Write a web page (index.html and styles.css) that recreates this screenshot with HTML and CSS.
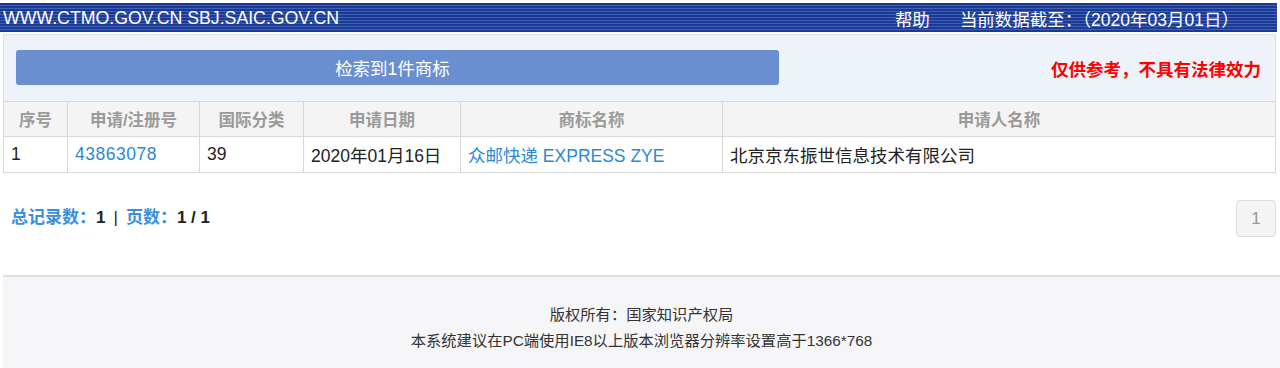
FILE: index.html
```html
<!DOCTYPE html>
<html lang="zh-CN">
<head>
<meta charset="utf-8">
<title>商标检索</title>
<link rel="stylesheet" href="styles.css">
</head>
<body>
<div class="page">
  <header class="topbar">
    <div class="site">WWW.CTMO.GOV.CN SBJ.SAIC.GOV.CN</div>
    <div class="topright">
      <span class="help">帮助</span>
      <span class="date">当前数据截至：（2020年03月01日）</span>
    </div>
  </header>
  <div class="main">
    <div class="panel">
      <div class="resultbtn">检索到1件商标</div>
      <div class="notice">仅供参考，不具有法律效力</div>
    </div>
    <table class="results">
      <colgroup>
        <col class="c1"><col class="c2"><col class="c3"><col class="c4"><col class="c5"><col class="c6">
      </colgroup>
      <thead>
        <tr><th>序号</th><th>申请/注册号</th><th>国际分类</th><th>申请日期</th><th>商标名称</th><th>申请人名称</th></tr>
      </thead>
      <tbody>
        <tr><td>1</td><td><a class="link num">43863078</a></td><td>39</td><td>2020年01月16日</td><td><a class="link">众邮快递 EXPRESS ZYE</a></td><td>北京京东振世信息技术有限公司</td></tr>
      </tbody>
    </table>
    <div class="pager">
      <div class="summary"><span class="lbl">总记录数：</span><b>1</b><span class="sep">|</span><span class="lbl">页数：</span><b>1 / 1</b></div>
      <div class="pagebtn">1</div>
    </div>
  </div>
  <footer class="footer">
    <p>版权所有：国家知识产权局</p>
    <p>本系统建议在PC端使用IE8以上版本浏览器分辨率设置高于1366*768</p>
  </footer>
</div>
</body>
</html>
```

FILE: styles.css
```css
* { box-sizing: border-box; }
html, body { margin: 0; padding: 0; background: #fff; }
body {
  font-family: "Liberation Sans", "Noto Sans CJK SC", sans-serif;
  color: #222;
  width: 1280px;
  height: 368px;
  overflow: hidden;
}
.page { display: flex; flex-direction: column; height: 368px; }
.topbar {
  margin: 3px 3px 0 0;
  height: 29px;
  background: repeating-linear-gradient(to bottom, #1a3a95 0 2px, #3f60b5 2px 3px);
  color: #fff;
  display: flex;
  align-items: center;
  justify-content: space-between;
  padding: 1px 0 0 3px;
}
.site { font-size: 17.8px; letter-spacing: -0.05px; }
.topright { display: flex; font-size: 17.5px; padding-right: 38px; }
.help { margin-right: 30px; }
.main { padding: 2px 4px 0 3px; }
.panel {
  height: 67px;
  background: #eef3f9;
  border: 1px solid #dcdfe3;
  border-bottom: none;
  display: flex;
  align-items: center;
  justify-content: space-between;
  padding: 0 14px 0 12px;
}
.resultbtn {
  width: 763px;
  height: 35px;
  margin-bottom: 1px;
  padding-right: 10px;
  background: #6a8fd1;
  border-radius: 3px;
  color: #fff;
  font-size: 17.5px;
  display: flex;
  align-items: center;
  justify-content: center;
}
.notice { color: #f00; font-weight: bold; font-size: 17.5px; margin-top: 1px; }
.results {
  width: 100%;
  border-collapse: collapse;
  table-layout: fixed;
  font-size: 17.5px;
}
.c1 { width: 64px; } .c2 { width: 132px; } .c3 { width: 104px; }
.c4 { width: 157px; } .c5 { width: 262px; }
.results th, .results td { border: 1px solid #d8d8d8; }
.results th {
  height: 35px;
  background: #f4f4f4;
  color: #9a9a9a;
  font-weight: bold;
  font-size: 16.5px;
  text-align: center;
}
.results td {
  height: 36px;
  padding: 0 7px;
  text-align: left;
  white-space: nowrap;
  color: #222;
}
.link { color: #2a88d4; text-decoration: none; }
.num { letter-spacing: 0.5px; }
.pager {
  display: flex;
  justify-content: space-between;
  align-items: flex-start;
  padding: 26px 0 0 8px;
  height: 103px;
}
.summary { font-size: 17px; margin-top: 4px; }
.summary .lbl { color: #3b8fdf; font-weight: bold; }
.summary b { color: #222; font-weight: bold; }
.summary .sep { color: #222; margin: 0 8px 0 8px; font-weight: normal; }
.pagebtn {
  width: 40px;
  height: 37px;
  margin-top: 1px;
  border: 1px solid #ddd;
  border-radius: 4px;
  background: #f4f4f4;
  color: #999;
  font-size: 17px;
  display: flex;
  align-items: center;
  justify-content: center;
}
.footer {
  flex: 1;
  border-top: 2px solid #dde0ec;
  margin-left: 3px;
  margin-top: -1px;
  background: #f6f6f8;
  text-align: center;
  font-size: 15.3px;
  color: #333;
  padding-top: 25px;
}
.footer p { margin: 0; line-height: 26px; }
```
